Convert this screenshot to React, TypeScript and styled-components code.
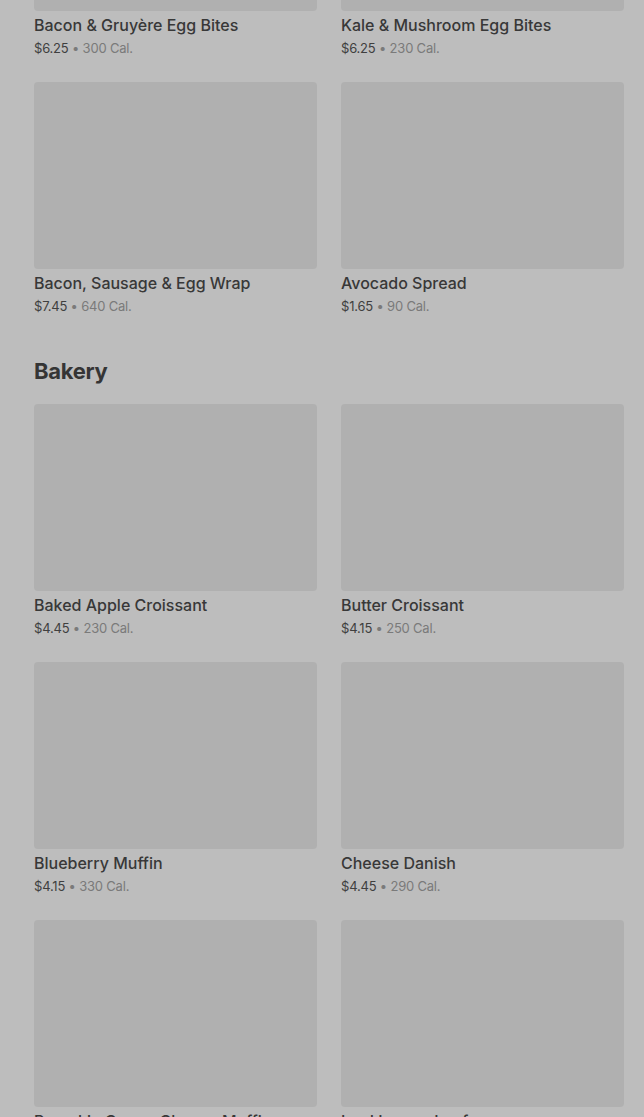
import React from "react";
import styled, { createGlobalStyle } from "styled-components";

const GlobalStyle = createGlobalStyle`
  html, body {
    margin: 0;
    padding: 0;
    background: #bdbdbd;
    font-family: Inter, "Noto Sans", sans-serif;
    overflow: hidden;
  }
`;

const Page = styled.div`
  padding: 0 20px 0 34px;
  margin-top: -176px;
`;

const Section = styled.section`
  margin-bottom: 40px;
`;

const SectionTitle = styled.h2`
  margin: 0 0 17px;
  font-size: 22px;
  line-height: 32px;
  font-weight: 700;
  color: #353535;
  letter-spacing: -0.3px;
`;

const Grid = styled.div`
  display: grid;
  grid-template-columns: 283px 283px;
  column-gap: 24px;
  row-gap: 25px;
`;

const Card = styled.div`
  display: flex;
  flex-direction: column;
`;

const Media = styled.div`
  height: 187px;
  border-radius: 4px;
  background: #b0b0b0;
`;

const Name = styled.div`
  margin-top: 4px;
  font-size: 16px;
  line-height: 20px;
  font-weight: 500;
  color: #383838;
  white-space: nowrap;
`;

const Meta = styled.div`
  margin-top: 4px;
  font-size: 13px;
  line-height: 18px;
  letter-spacing: -0.2px;
  color: #3f3f3f;
`;

const Cal = styled.span`
  color: #7a7a7a;
`;

type Item = { name: string; price: string; cal: number };

const breakfast: Item[] = [
  { name: "Bacon & Gruyère Egg Bites", price: "$6.25", cal: 300 },
  { name: "Kale & Mushroom Egg Bites", price: "$6.25", cal: 230 },
  { name: "Bacon, Sausage & Egg Wrap", price: "$7.45", cal: 640 },
  { name: "Avocado Spread", price: "$1.65", cal: 90 },
];

const bakery: Item[] = [
  { name: "Baked Apple Croissant", price: "$4.45", cal: 230 },
  { name: "Butter Croissant", price: "$4.15", cal: 250 },
  { name: "Blueberry Muffin", price: "$4.15", cal: 330 },
  { name: "Cheese Danish", price: "$4.45", cal: 290 },
  { name: "Pumpkin Cream Cheese Muffin", price: "$4.15", cal: 350 },
  { name: "Iced Lemon Loaf", price: "$3.95", cal: 470 },
];

const MenuCard = ({ item }: { item: Item }) => (
  <Card>
    <Media />
    <Name>{item.name}</Name>
    <Meta>
      {item.price} <Cal>• {item.cal} Cal.</Cal>
    </Meta>
  </Card>
);

export default function App() {
  return (
    <>
      <GlobalStyle />
      <Page>
        <Section>
          <Grid>
            {breakfast.map((it) => (
              <MenuCard key={it.name} item={it} />
            ))}
          </Grid>
        </Section>
        <Section>
          <SectionTitle>Bakery</SectionTitle>
          <Grid>
            {bakery.map((it) => (
              <MenuCard key={it.name} item={it} />
            ))}
          </Grid>
        </Section>
      </Page>
    </>
  );
}
